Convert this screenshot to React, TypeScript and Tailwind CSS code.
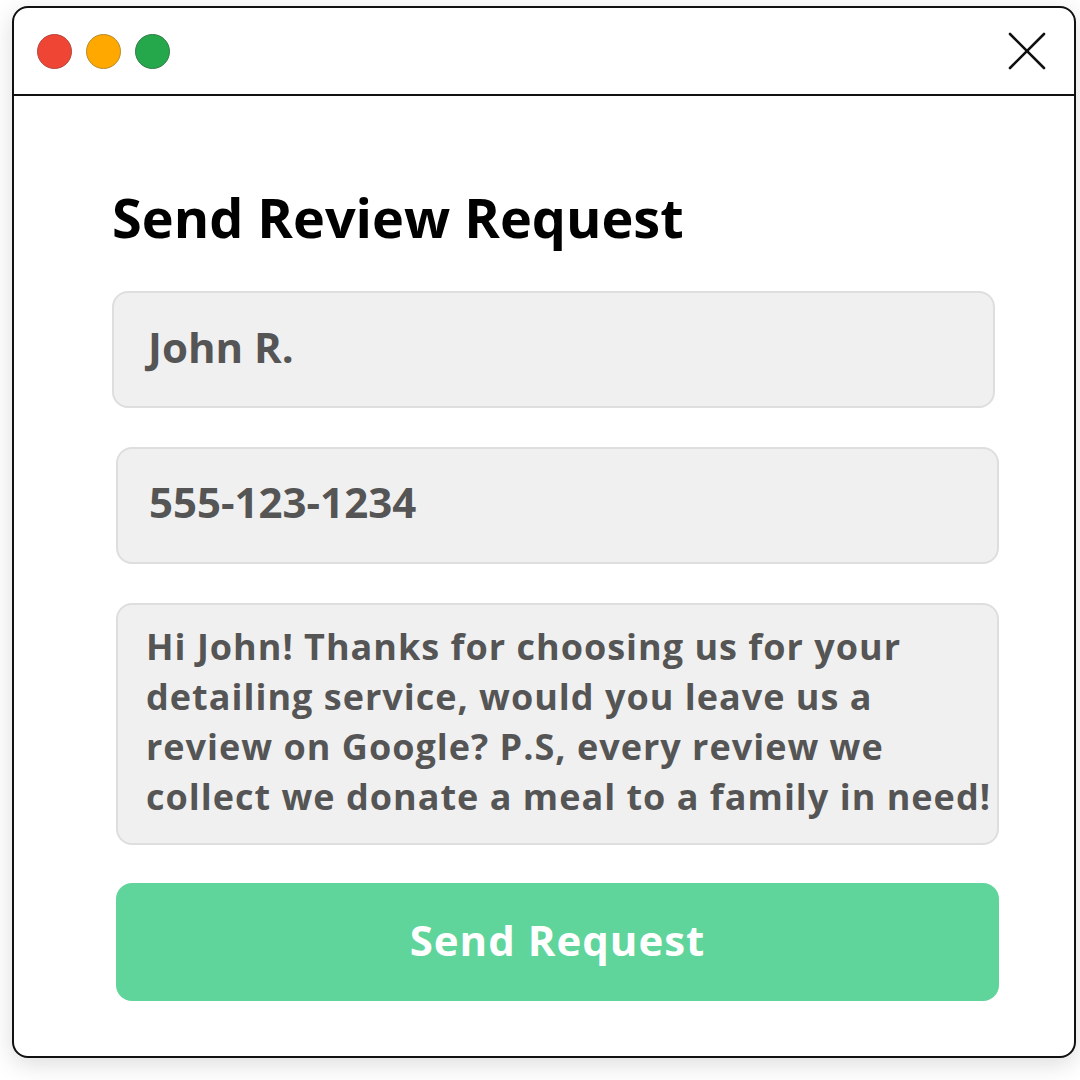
const font = { fontFamily: '"Open Sans", "Noto Sans", sans-serif' };

function CloseIcon() {
  return (
    <svg width="38" height="38" viewBox="0 0 38 38" fill="none" stroke="#111" strokeWidth="2.6" strokeLinecap="round">
      <line x1="2" y1="2" x2="36" y2="36" />
      <line x1="36" y1="2" x2="2" y2="36" />
    </svg>
  );
}

export default function App() {
  return (
    <div className="w-[1080px] h-[1080px] bg-white pl-[12px] pt-[6px]" style={font}>
      <div className="w-[1064px] h-[1052px] rounded-[16px] border-2 border-[#111] bg-white shadow-[0_6px_24px_rgba(0,0,0,0.14)] flex flex-col overflow-hidden">
        {/* Title bar */}
        <div className="h-[88px] border-b-2 border-[#111] flex items-center justify-between pl-[23px] pr-[28px] shrink-0">
          <div className="flex items-center gap-[14px]">
            <span className="w-[35px] h-[35px] rounded-full bg-[#ef4535] border border-[#b9433a]" />
            <span className="w-[35px] h-[35px] rounded-full bg-[#fea800] border border-[#b98a2c]" />
            <span className="w-[35px] h-[35px] rounded-full bg-[#25a84b] border border-[#2f7d45]" />
          </div>
          <CloseIcon />
        </div>

        {/* Form */}
        <div className="flex flex-col pl-[102px] pr-[75px] pt-[94px]">
          <h1 className="-ml-[4px] text-[54px] leading-none font-bold text-black whitespace-nowrap">
            Send Review Request
          </h1>

          <div className="-ml-[4px] mr-[4px] mt-[47px] h-[117px] rounded-[16px] bg-[#f0f0f0] border-2 border-[#dedede] flex items-center pl-[34px] pb-[6px]">
            <span className="text-[42px] font-bold text-[#555]">John R.</span>
          </div>

          <div className="mt-[39px] h-[117px] rounded-[16px] bg-[#f0f0f0] border-2 border-[#dedede] flex items-center pl-[31px] pb-[9px]">
            <span className="text-[42px] font-bold text-[#555]">555-123-1234</span>
          </div>

          <div className="mt-[39px] h-[242px] rounded-[16px] bg-[#f0f0f0] border-2 border-[#dedede] pl-[28px] pt-[17px]">
            <p className="text-[36px] leading-[50px] tracking-[1px] font-bold text-[#555] whitespace-nowrap">
              Hi John! Thanks for choosing us for your
              <br />
              detailing service, would you leave us a
              <br />
              review on Google? P.S, every review we
              <br />
              collect we donate a meal to a family in need!
            </p>
          </div>

          <button className="mt-[38px] h-[118px] rounded-[16px] bg-[#5fd59b] text-white text-[42px] tracking-[1px] font-bold flex items-center justify-center pb-[6px]">
            Send Request
          </button>
        </div>
      </div>
    </div>
  );
}
